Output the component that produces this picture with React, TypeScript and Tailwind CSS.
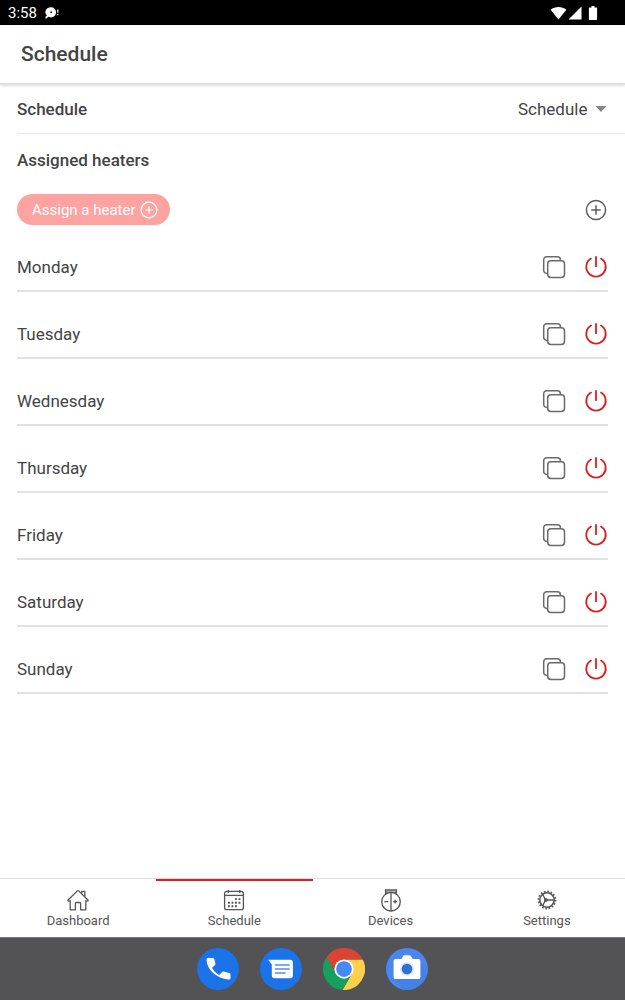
import { useState } from "react";

const days = [
  "Monday",
  "Tuesday",
  "Wednesday",
  "Thursday",
  "Friday",
  "Saturday",
  "Sunday",
];

function PlusCircleIcon({ className }: { className: string }) {
  return (
    <svg viewBox="0 0 22 22" fill="none" stroke="currentColor" strokeWidth="1.5" strokeLinecap="round" className={className}>
      <circle cx="11" cy="11" r="9.6" />
      <path d="M11 6.8v8.4M6.8 11h8.4" />
    </svg>
  );
}

function CopyIcon() {
  return (
    <svg viewBox="0 0 24 24" fill="none" stroke="currentColor" strokeWidth="1.5" className="size-6">
      <rect x="5.7" y="5.7" width="16.8" height="16.8" rx="3.2" />
      <path d="M5.700 18.400H4.700a3 3 0 0 1-3-3V4.700a3 3 0 0 1 3-3h10.700a3 3 0 0 1 3 3v1" />
    </svg>
  );
}

function PowerIcon() {
  return (
    <svg viewBox="0 0 24 24" fill="none" stroke="currentColor" strokeWidth="1.800" strokeLinecap="round" className="size-6">
      <path d="M12 2v9.200" />
      <path d="M7 3.600a9.700 9.700 0 1 0 10 0" />
    </svg>
  );
}

function HomeIcon() {
  return (
    <svg viewBox="0 0 24 24" fill="none" stroke="currentColor" strokeWidth="1.3" strokeLinejoin="round" className="size-6">
      <path d="M4.2 12.2v9.6h5.200v-6.200c0-.7.4-1.100 1.100-1.100h3c.7 0 1.100.4 1.100 1.100v6.200h5.200v-9.600" />
      <path d="M4.200 13.100 2 12.900l-.2-.7 9.500-9.300c.4-.4 1-.4 1.400 0l9.500 9.300-.2.7-2.200.2" />
      <path d="M15.800 5.600V3.300h3v5.300" />
    </svg>
  );
}

function CalendarIcon() {
  return (
    <svg viewBox="0 0 24 24" fill="none" stroke="currentColor" strokeWidth="1.3" className="size-6">
      <rect x="2.6" y="3.4" width="18.8" height="18.2" rx="2.2" />
      <path d="M2.600 7.400h18.800" />
      <path d="M6.200 1.900v3M17.800 1.900v3" />
      <path d="M13 11.100h5.800M6 14.700h12.800M6 18.200h9.200" strokeWidth="1.9" strokeDasharray="1.9 1.6" />
    </svg>
  );
}

function DeviceIcon() {
  return (
    <svg viewBox="0 0 24 24" fill="none" stroke="currentColor" strokeWidth="1.3" className="size-6">
      <circle cx="12" cy="13.7" r="9.3" />
      <path d="M6.600 6.200V2h10.800v4.200M6.600 4.200h10.800M12 4.400V23" />
      <path d="M5.400 13.700h3.800M14.200 13.700H18M16.100 11.800v3.800" />
    </svg>
  );
}

function GearIcon() {
  return (
    <svg viewBox="0 0 24 24" fill="none" stroke="currentColor" strokeWidth="1.3" className="size-6">
      <circle cx="12" cy="12" r="8.4" strokeWidth="2" strokeDasharray="1.6 1.699" />
      <circle cx="12" cy="12" r="7.2" strokeWidth="1.500" />
      <path d="M10.200 12 7.900 6M10.200 12l-2.300 6M10.200 12h9" />
      <circle cx="11" cy="12" r="1.300" />
    </svg>
  );
}

const tabs = [
  { label: "Dashboard", icon: HomeIcon },
  { label: "Schedule", icon: CalendarIcon },
  { label: "Devices", icon: DeviceIcon },
  { label: "Settings", icon: GearIcon },
];

function StatusBar() {
  return (
    <div className="flex h-[25px] items-center justify-between bg-black pr-6 pl-2 text-white">
      <div className="flex items-center gap-2">
        <span className="text-[15px] leading-5">3:58</span>
        <svg viewBox="0 0 14 14" className="size-[14px]">
          <path fill="currentColor" d="M6 1.200a5 5 0 1 1 0 10.200L3.400 10.800.7 13 .4 10.800l1.600-1A5 5 0 0 1 6 1.200Z" />
          <circle cx="6.2" cy="6.2" r="0.9" fill="#000" />
          <path stroke="currentColor" strokeWidth="1.2" d="M12.800 3.600v3.200M12.800 8v1.300" />
        </svg>
      </div>
      <div className="flex items-center gap-px">
        <svg viewBox="0 0 17 14" className="h-[14px] w-[17px]" fill="currentColor">
          <path d="M8.500 13.500.6 3.800C5 .1 12 .1 16.400 3.800Z" />
        </svg>
        <svg viewBox="0 0 14 14" className="size-[14px]" fill="currentColor">
          <path d="M13.500.5v13H.5Z" />
        </svg>
        <svg viewBox="2 0 18 14" className="h-[14px] w-[18px]" fill="currentColor">
          <path d="M10.500 0h3v1.500h1.800q.8 0 .8.8v10.900q0 .8-.8.8H8.700q-.8 0-.8-.8V2.300q0-.8.8-.8h1.800Z" />
        </svg>
      </div>
    </div>
  );
}

function Dock() {
  return (
    <div className="flex h-[63px] items-center justify-center gap-[21px] border-t border-[#77767a] bg-[#535255]">
      <button aria-label="Phone">
        <svg viewBox="0 0 42 42" className="size-[42px]">
          <circle cx="21" cy="21" r="21" fill="#1a73e8" />
          <path
            fill="#fff"
            d="M11.200 10h4.700c.8 0 1.300.4 1.500 1.200l1 4.300c.1.600 0 1-.4 1.400l-3 2.900c1.700 3.200 4 5.500 7.200 7.200l2.900-3c.4-.4.9-.5 1.400-.4l5.800 1.300c.8.2 1.200.7 1.200 1.500v3.500c0 1-.7 1.600-1.700 1.600C19.900 31 9.600 21.500 9.600 11.600c0-1 .6-1.600 1.600-1.600Z"
          />
        </svg>
      </button>
      <button aria-label="Messages">
        <svg viewBox="0 0 42 42" className="size-[42px]">
          <circle cx="21" cy="21" r="21" fill="#1a73e8" />
          <path fill="#fff" d="M8.200 11.800h22q2.700 0 2.700 2.700v13q0 2.700-2.700 2.700H14.500q-2.700 0-2.700-2.700V16.500Z" />
          <path stroke="#7fa9ee" strokeWidth="1.8" strokeLinecap="round" d="M15.500 17h13.500M15.500 21h13.500M15.500 25h9.500" />
        </svg>
      </button>
      <button aria-label="Chrome">
        <svg viewBox="0 0 48 48" className="size-[42px]">
          <path fill="#d94435" d="M14.900 29.250 4.100 10.550A24 24 0 0 1 45.600 13.500H24Z" />
          <path fill="#ffd04b" d="M24 13.500H45.600A24 24 0 0 1 22.300 47.950L33.100 29.250Z" />
          <path fill="#15a05d" d="M33.100 29.250 22.300 47.950A24 24 0 0 1 4.100 10.550L14.900 29.250Z" />
          <circle cx="24" cy="24" r="11" fill="#fff" />
          <circle cx="24" cy="24" r="9" fill="#4688f4" />
        </svg>
      </button>
      <button aria-label="Camera">
        <svg viewBox="0 0 42 42" className="size-[42px]">
          <circle cx="21" cy="21" r="21" fill="#4a86ee" />
          <path fill="#2f6fd8" d="m8.500 30.500 25-18 7.500 15A21 21 0 0 1 17 41.600Z" opacity=".25" />
          <path
            fill="#fff"
            d="M9.500 11h5.800l1.700-2.700q.6-1 1.600-1h4.800q1 0 1.600 1l1.700 2.700h5.800q1.900 0 1.900 1.900v16.300q0 1.900-1.900 1.900h-23q-1.900 0-1.900-1.900V12.900q0-1.900 1.900-1.900Z"
          />
          <circle cx="21" cy="21" r="6.8" fill="#d5e1f7" />
          <circle cx="21" cy="21" r="5.3" fill="#2d70d8" />
        </svg>
      </button>
    </div>
  );
}

export default function App() {
  const [activeTab, setActiveTab] = useState("Schedule");
  const [schedule, setSchedule] = useState("Schedule");

  return (
    <div className="flex min-h-screen flex-col bg-white font-[Roboto,sans-serif] text-[#444444]">
      <StatusBar />

      <header className="flex h-[60px] items-center border-b-2 border-[#e0e0e0] px-[21px] shadow-sm">
        <h1 className="text-[21px] leading-6 font-medium">Schedule</h1>
      </header>

      <main className="flex-1 pl-[17px]">
        <div className="flex h-[49px] items-center justify-between border-b border-[#e8e8e8] pr-[17px]">
          <label htmlFor="schedule" className="text-[17px] leading-6 font-medium">
            Schedule
          </label>
          <div className="relative flex items-center">
            <select
              id="schedule"
              value={schedule}
              onChange={(e) => setSchedule(e.target.value)}
              className="appearance-none bg-transparent pr-5 text-[17px] leading-6"
            >
              <option value="Schedule">Schedule</option>
            </select>
            <svg viewBox="0 0 12 6" className="pointer-events-none absolute right-px h-[6px] w-3" fill="#858585">
              <path d="M.5 0h11L6 6Z" />
            </svg>
          </div>
        </div>

        <div className="pr-[17px]">
          <h2 className="pt-[14px] text-[17px] leading-6 font-medium">Assigned heaters</h2>

          <div className="mt-[22px] flex items-center justify-between">
            <button className="flex h-[31px] items-center gap-1 rounded-full bg-[#fda4a2] pr-3 pl-[15px] text-[15px] leading-5 text-white">
              Assign a heater
              <PlusCircleIcon className="size-[18px]" />
            </button>
            <button aria-label="Add time slot" className="px-px text-[#5f5f5f]">
              <PlusCircleIcon className="size-[22px]" />
            </button>
          </div>

          <ul>
            {days.map((day) => (
              <li key={day} className="flex h-[67px] items-end justify-between border-b-2 border-[#e2e2e2] pb-[11px]">
                <span className="text-[17px] leading-6">{day}</span>
                <div className="flex gap-[18px]">
                  <button aria-label={`Copy ${day}`} className="text-[#6a6a6a]">
                    <CopyIcon />
                  </button>
                  <button aria-label={`Turn off ${day}`} className="text-[#d8201f]">
                    <PowerIcon />
                  </button>
                </div>
              </li>
            ))}
          </ul>
        </div>
      </main>

      <nav className="grid h-[59px] grid-cols-4 border-t border-[#dedede]">
        {tabs.map(({ label, icon: Icon }) => (
          <button
            key={label}
            onClick={() => setActiveTab(label)}
            className={`flex flex-col items-center gap-px border-t-2 pt-[7px] text-[13px] leading-4 text-[#555555] ${
              activeTab === label ? "border-[#d8201f]" : "border-transparent"
            }`}
          >
            <Icon />
            {label}
          </button>
        ))}
      </nav>

      <Dock />
    </div>
  );
}
